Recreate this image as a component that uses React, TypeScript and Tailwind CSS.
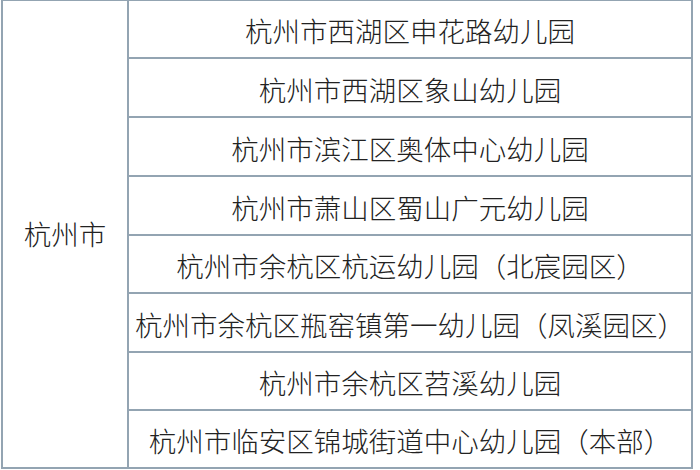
const rows = [
  { name: "杭州市西湖区申花路幼儿园", h: "h-[58px]" },
  { name: "杭州市西湖区象山幼儿园", h: "h-[59px]" },
  { name: "杭州市滨江区奥体中心幼儿园", h: "h-[59px]" },
  { name: "杭州市萧山区蜀山广元幼儿园", h: "h-[59px]" },
  { name: "杭州市余杭区杭运幼儿园（北宸园区）", h: "h-[58px]" },
  { name: "杭州市余杭区瓶窑镇第一幼儿园（凤溪园区）", h: "h-[59px]" },
  { name: "杭州市余杭区苕溪幼儿园", h: "h-[58px]" },
  { name: "杭州市临安区锦城街道中心幼儿园（本部）", h: "h-[56px]" },
];

export default function App() {
  return (
    <div
      className="h-[470px] w-[700px] overflow-hidden bg-white text-[27.5px] font-light text-[#222]"
      style={{ fontFamily: '"Noto Sans CJK SC", "Noto Sans", sans-serif' }}
    >
      <div className="-mt-px ml-px flex h-[470px] w-[692px] border-2 border-[#93a4b2]">
        <div className="flex w-[126px] shrink-0 items-center justify-center border-r-2 border-[#93a4b2]">
          杭州市
        </div>
        <div className="flex flex-1 flex-col">
          {rows.map((row, i) => (
            <div
              key={row.name}
              className={`${row.h} flex items-center justify-center whitespace-nowrap pt-1 ${
                i < rows.length - 1 ? "border-b-2 border-[#93a4b2]" : ""
              }`}
            >
              {row.name}
            </div>
          ))}
        </div>
      </div>
    </div>
  );
}
